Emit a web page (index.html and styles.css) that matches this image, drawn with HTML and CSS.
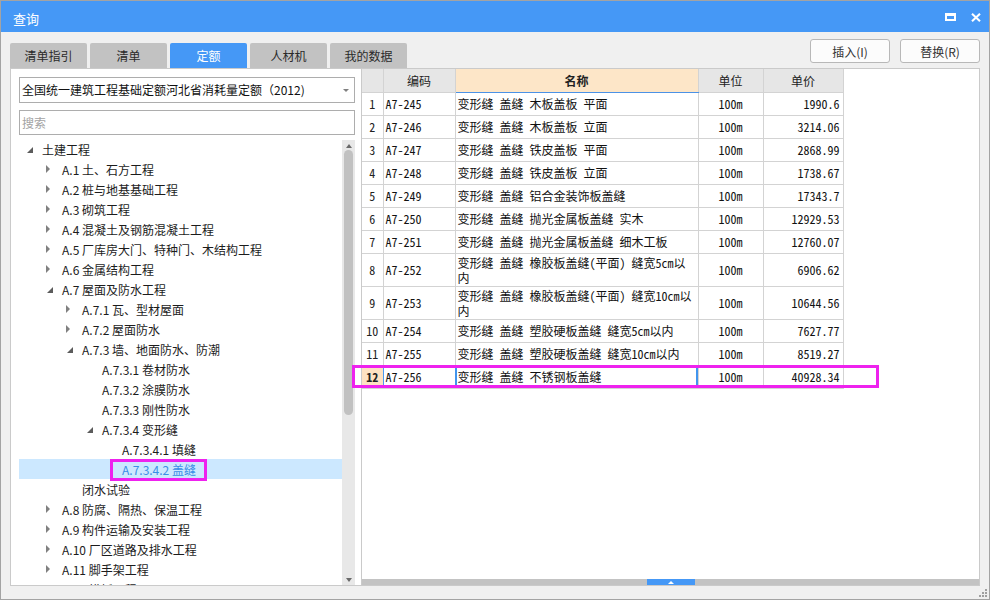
FILE: index.html
```html
<!DOCTYPE html>
<html lang="zh-CN">
<head>
<meta charset="utf-8">
<title>查询</title>
<link rel="stylesheet" href="styles.css">
</head>
<body>
<div class="window">
  <div class="titlebar">
    <span class="title">查询</span>
    <div class="winbtns">
      <svg class="ico" width="11" height="8" viewBox="0 0 11 8"><rect x="1" y="1.5" width="9" height="5.5" fill="none" stroke="#fff" stroke-width="2"/><rect x="0" y="0" width="11" height="3" fill="#fff"/></svg>
      <svg class="ico" width="10" height="9" viewBox="0 0 10 9"><path d="M1 0.8 L9 8.2 M9 0.8 L1 8.2" stroke="#fff" stroke-width="2.1" fill="none"/></svg>
    </div>
  </div>

  <div class="toolbar">
    <div class="tabs">
      <div class="tab">清单指引</div>
      <div class="tab">清单</div>
      <div class="tab active">定额</div>
      <div class="tab">人材机</div>
      <div class="tab">我的数据</div>
    </div>
    <div class="actions">
      <button class="btn">插入(I)</button>
      <button class="btn">替换(R)</button>
    </div>
  </div>

  <div class="main">
    <div class="left">
      <div class="select">全国统一建筑工程基础定额河北省消耗量定额（2012)</div>
      <div class="search">搜索</div>
      <div class="treewrap">
        <div class="tree">
          <div class="row l0"><i class="tw e"></i><span>土建工程</span></div>
          <div class="row l1"><i class="tw c"></i><span>A.1 土、石方工程</span></div>
          <div class="row l1"><i class="tw c"></i><span>A.2 桩与地基基础工程</span></div>
          <div class="row l1"><i class="tw c"></i><span>A.3 砌筑工程</span></div>
          <div class="row l1"><i class="tw c"></i><span>A.4 混凝土及钢筋混凝土工程</span></div>
          <div class="row l1"><i class="tw c"></i><span>A.5 厂库房大门、特种门、木结构工程</span></div>
          <div class="row l1"><i class="tw c"></i><span>A.6 金属结构工程</span></div>
          <div class="row l1"><i class="tw e"></i><span>A.7 屋面及防水工程</span></div>
          <div class="row l2"><i class="tw c"></i><span>A.7.1 瓦、型材屋面</span></div>
          <div class="row l2"><i class="tw c"></i><span>A.7.2 屋面防水</span></div>
          <div class="row l2"><i class="tw e"></i><span>A.7.3 墙、地面防水、防潮</span></div>
          <div class="row l3"><i class="tw"></i><span>A.7.3.1 卷材防水</span></div>
          <div class="row l3"><i class="tw"></i><span>A.7.3.2 涂膜防水</span></div>
          <div class="row l3"><i class="tw"></i><span>A.7.3.3 刚性防水</span></div>
          <div class="row l3"><i class="tw e"></i><span>A.7.3.4 变形缝</span></div>
          <div class="row l4"><i class="tw"></i><span>A.7.3.4.1 填缝</span></div>
          <div class="row l4 sel"><i class="tw"></i><span class="hl">A.7.3.4.2 盖缝</span></div>
          <div class="row l2"><i class="tw"></i><span>闭水试验</span></div>
          <div class="row l1"><i class="tw c"></i><span>A.8 防腐、隔热、保温工程</span></div>
          <div class="row l1"><i class="tw c"></i><span>A.9 构件运输及安装工程</span></div>
          <div class="row l1"><i class="tw c"></i><span>A.10 厂区道路及排水工程</span></div>
          <div class="row l1"><i class="tw c"></i><span>A.11 脚手架工程</span></div>
          <div class="row l1"><i class="tw c"></i><span>A.12 模板工程</span></div>
        </div>
        <div class="vscroll">
          <span class="arr up"></span>
          <div class="thumb"></div>
          <span class="arr down"></span>
        </div>
      </div>
    </div>

    <div class="right">
      <table class="grid">
        <colgroup><col class="c1"><col class="c2"><col class="c3"><col class="c4"><col class="c5"></colgroup>
        <thead>
          <tr><th></th><th>编码</th><th class="name">名称</th><th>单位</th><th>单价</th></tr>
        </thead>
        <tbody>
          <tr><td class="num">1</td><td>A7-245</td><td>变形缝 盖缝 木板盖板 平面</td><td class="unit">100m</td><td class="price">1990.6</td></tr>
          <tr><td class="num">2</td><td>A7-246</td><td>变形缝 盖缝 木板盖板 立面</td><td class="unit">100m</td><td class="price">3214.06</td></tr>
          <tr><td class="num">3</td><td>A7-247</td><td>变形缝 盖缝 铁皮盖板 平面</td><td class="unit">100m</td><td class="price">2868.99</td></tr>
          <tr><td class="num">4</td><td>A7-248</td><td>变形缝 盖缝 铁皮盖板 立面</td><td class="unit">100m</td><td class="price">1738.67</td></tr>
          <tr><td class="num">5</td><td>A7-249</td><td>变形缝 盖缝 铝合金装饰板盖缝</td><td class="unit">100m</td><td class="price">17343.7</td></tr>
          <tr><td class="num">6</td><td>A7-250</td><td>变形缝 盖缝 抛光金属板盖缝 实木</td><td class="unit">100m</td><td class="price">12929.53</td></tr>
          <tr><td class="num">7</td><td>A7-251</td><td>变形缝 盖缝 抛光金属板盖缝 细木工板</td><td class="unit">100m</td><td class="price">12760.07</td></tr>
          <tr class="tall"><td class="num">8</td><td>A7-252</td><td class="wrap">变形缝 盖缝 橡胶板盖缝(平面) 缝宽5cm以<br>内</td><td class="unit">100m</td><td class="price">6906.62</td></tr>
          <tr class="tall"><td class="num">9</td><td>A7-253</td><td class="wrap">变形缝 盖缝 橡胶板盖缝(平面) 缝宽10cm以<br>内</td><td class="unit">100m</td><td class="price">10644.56</td></tr>
          <tr><td class="num">10</td><td>A7-254</td><td>变形缝 盖缝 塑胶硬板盖缝 缝宽5cm以内</td><td class="unit">100m</td><td class="price">7627.77</td></tr>
          <tr><td class="num">11</td><td>A7-255</td><td>变形缝 盖缝 塑胶硬板盖缝 缝宽10cm以内</td><td class="unit">100m</td><td class="price">8519.27</td></tr>
          <tr class="cur"><td class="num">12</td><td>A7-256</td><td class="name">变形缝 盖缝 不锈钢板盖缝</td><td class="unit">100m</td><td class="price">40928.34</td></tr>
        </tbody>
      </table>
      <div class="fill"></div>
      <div class="hbar"><div class="handle"><span class="tri"></span></div></div>
      <div class="mark"></div>
    </div>
  </div>

  <div class="status">
    <svg class="grip" width="8" height="8" viewBox="0 0 8 8"><rect x="6" y="0" width="2" height="2" fill="#a0a0a0"/><rect x="3" y="3" width="2" height="2" fill="#a0a0a0"/><rect x="6" y="3" width="2" height="2" fill="#a0a0a0"/><rect x="0" y="6" width="2" height="2" fill="#a0a0a0"/><rect x="3" y="6" width="2" height="2" fill="#a0a0a0"/><rect x="6" y="6" width="2" height="2" fill="#a0a0a0"/></svg>
  </div>
</div>
</body>
</html>
```

FILE: styles.css
```css
* { box-sizing: border-box; }

body {
  margin: 0;
  background: #ffffff;
  font-family: "Noto Sans CJK SC", "Microsoft YaHei", sans-serif;
  font-size: 12px;
  color: #222;
}

.window {
  width: 990px;
  height: 600px;
  border: 1px solid #a3a3a3;
  background: #f0f0f0;
  display: flex;
  flex-direction: column;
  position: relative;
}

/* title bar */
.titlebar {
  height: 31px;
  flex: none;
  background: #4598f6;
  color: #fff;
  display: flex;
  align-items: center;
  justify-content: space-between;
  padding: 0 8px 0 12px;
}
.title { font-size: 13px; padding-top: 4px; }
.winbtns { display: flex; align-items: center; gap: 15px; padding-top: 1px; }
.ico { display: block; }

/* toolbar */
.toolbar {
  height: 36px;
  flex: none;
  display: flex;
  justify-content: space-between;
  padding: 0 9px;
}
.tabs { display: flex; gap: 3px; align-self: flex-end; }
.tab {
  width: 77px;
  height: 25px;
  background: #c2c2c2;
  border-radius: 2px 2px 0 0;
  display: flex;
  align-items: center;
  justify-content: center;
  font-size: 12px;
  color: #2a2a2a;
}
.tab.active { background: #4598f6; color: #fff; }
.actions { display: flex; gap: 10px; padding-top: 7px; }
.btn {
  width: 80px;
  height: 24px;
  border: 1px solid #b8b8b8;
  border-radius: 3px;
  background: #fcfcfc;
  font-family: "Noto Sans CJK SC", sans-serif;
  font-size: 12px;
  color: #333;
  padding: 0;
}

/* main */
.main {
  height: 518px;
  flex: none;
  display: flex;
  padding: 0 9px;
}
.left {
  width: 352px;
  flex: none;
  border: 1px solid #cacaca;
  background: #fff;
  padding: 8px 6px 0 8px;
  display: flex;
  flex-direction: column;
}
.select {
  height: 26px;
  flex: none;
  border: 1px solid #adadad;
  padding-left: 2px;
  line-height: 24px;
  color: #111;
  white-space: nowrap;
  position: relative;
}
.select::after {
  content: "";
  position: absolute;
  right: 5px;
  top: 11px;
  border-top: 3px solid #808080;
  border-left: 3.5px solid transparent;
  border-right: 3.5px solid transparent;
}
.search {
  margin-top: 7px;
  height: 25px;
  flex: none;
  border: 1px solid #adadad;
  padding-left: 2px;
  line-height: 23px;
  color: #a3a3a3;
}
.treewrap {
  margin-top: 5px;
  flex: 1;
  min-height: 0;
  display: flex;
  overflow: hidden;
}
.tree { flex: 1; min-width: 0; margin-top: -1px; }
.row {
  height: 20px;
  display: flex;
  align-items: center;
  white-space: nowrap;
  color: #1c1c1c;
}
.l1 { padding-left: 20px; }
.l2 { padding-left: 40px; }
.l3 { padding-left: 60px; }
.l4 { padding-left: 80px; }
.tw { width: 23px; flex: none; display: flex; align-items: center; height: 20px; }
.tw.c::before {
  content: "";
  margin-left: 7px;
  border-left: 4px solid #808080;
  border-top: 4px solid transparent;
  border-bottom: 4px solid transparent;
}
.tw.e::before {
  content: "";
  margin-left: 8px;
  margin-top: 1px;
  border-bottom: 6px solid #5c5c5c;
  border-left: 6px solid transparent;
}
.row.sel { background: #cce8ff; color: #3a8ee6; }
.hl { position: relative; }
.hl::after {
  content: "";
  position: absolute;
  left: -12px;
  right: -11px;
  top: -2px;
  bottom: -3px;
  border: 3px solid #ee22ee;
}

.vscroll {
  width: 13px;
  flex: none;
  background: #e8e8e8;
  display: flex;
  flex-direction: column;
  align-items: center;
}
.arr { display: block; width: 0; height: 0; border-left: 3.5px solid transparent; border-right: 3.5px solid transparent; }
.arr.up { margin-top: 4px; border-bottom: 4px solid #6a6a6a; }
.arr.down { margin-top: auto; margin-bottom: 3px; border-top: 4px solid #6a6a6a; }
.thumb {
  margin-top: 2px;
  width: 9px;
  height: 265px;
  border-radius: 4.5px;
  background: #c1c1c1;
}

/* right panel */
.right {
  flex: 1;
  border: 1px solid #cacaca;
  border-left: none;
  background: #fff;
  position: relative;
  display: flex;
  flex-direction: column;
}
.grid {
  border-collapse: collapse;
  table-layout: fixed;
  width: 481px;
  font-family: "Noto Sans Mono CJK SC", "Noto Sans CJK SC", monospace;
  font-size: 12px;
  color: #111;
}
.c1 { width: 21px; }
.c2 { width: 72px; }
.c3 { width: 243px; }
.c4 { width: 65px; }
.c5 { width: 80px; }
.grid th, .grid td {
  border: 1px solid #d3d3d3;
  padding: 0 2px;
  height: 23px;
  white-space: nowrap;
  overflow: hidden;
  text-align: left;
  vertical-align: middle;
  line-height: 15px;
}
.grid th {
  border-top: none;
  background: #e6e6e6;
  font-family: "Noto Sans CJK SC", sans-serif;
  font-weight: normal;
  text-align: center;
  color: #222;
}
.grid th.name {
  background: #fde6c8;
  font-weight: bold;
  border-bottom: 1px solid #4b92e6;
}
.grid tr > :first-child { border-left: none; }
.grid tr.tall td { height: 33px; }
.grid td.wrap { overflow: visible; }
.grid td.num { text-align: center; padding: 0; color: #222; }
.grid td.unit { text-align: center; }
.grid td.price { text-align: right; padding-right: 3px; }
.grid tr.cur td.num { background: #fde2c3; font-weight: bold; border-right: 1px solid #4a9af0; }
.grid tr.cur td.name { outline: 2px solid #4195ee; outline-offset: -2px; }

.fill { flex: 1; }
.hbar {
  height: 6px;
  flex: none;
  background: #c3c3c3;
  display: flex;
  justify-content: center;
}
.handle {
  width: 48px;
  background: #4598f6;
  display: flex;
  align-items: center;
  justify-content: center;
}
.tri {
  width: 0;
  height: 0;
  border-left: 3px solid transparent;
  border-right: 3px solid transparent;
  border-bottom: 3px solid #fff;
}
.mark {
  position: absolute;
  left: -10px;
  top: 296px;
  width: 527px;
  height: 23px;
  border: 3px solid #ee22ee;
  pointer-events: none;
}

/* bottom */
.status { flex: 1; position: relative; }
.grip { position: absolute; right: 2px; bottom: 2px; }
```
